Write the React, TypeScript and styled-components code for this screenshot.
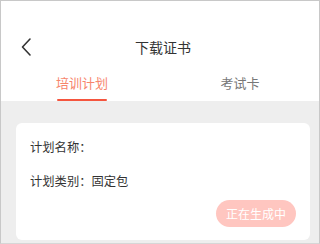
import styled, { createGlobalStyle } from "styled-components";

const Global = createGlobalStyle`
    html, body {
        margin: 0;
        padding: 0;
        background: #fff;
    }
    body {
        font-family: "Noto Sans CJK SC", "Noto Sans", sans-serif;
    }
`;

const Frame = styled.div`
    width: 320px;
    height: 244px;
    box-sizing: border-box;
    border: 1px solid #c8c8c8;
    border-bottom-color: #d6d6d6;
    display: flex;
    flex-direction: column;
    overflow: hidden;
    background: #eeeeee;
`;

const Top = styled.div`
    background: #fff;
    padding-top: 28px;
`;

const NavBar = styled.div`
    height: 36px;
    display: flex;
    align-items: center;
    justify-content: center;
    position: relative;
`;

const Back = styled.button`
    all: unset;
    position: absolute;
    left: 17px;
    top: 8px;
    width: 16px;
    height: 20px;
    cursor: pointer;
`;

const Title = styled.h1`
    margin: 0 0 0 6px;
    font-size: 14px;
    font-weight: 400;
    color: #333;
`;

const Tabs = styled.div`
    display: flex;
    height: 36px;
    padding-left: 2px;
`;

const Tab = styled.button<{ $active?: boolean }>`
    all: unset;
    flex: 1;
    display: flex;
    justify-content: center;
    align-items: flex-start;
    padding-top: 8px;
    font-size: 13px;
    color: ${(p) => (p.$active ? "#f7856d" : "#777")};
    cursor: pointer;
    span {
        position: relative;
        height: 28px;
        line-height: 20px;
        &::after {
            content: "";
            position: absolute;
            left: 1px;
            right: 1px;
            bottom: 0;
            height: 2px;
            border-radius: 1px;
            background: ${(p) => (p.$active ? "#f5553e" : "transparent")};
        }
    }
`;

const Body = styled.div`
    flex: 1;
    padding: 22px 9px 0 15px;
`;

const Card = styled.div`
    background: #fff;
    border-radius: 6px;
    padding: 15px 14px 0 14px;
    height: 117px;
    box-sizing: border-box;
    display: flex;
    flex-direction: column;
`;

const Row = styled.div`
    font-size: 12.3px;
    color: #333;
    line-height: 18px;
    & + & {
        margin-top: 16px;
    }
`;

const Actions = styled.div`
    display: flex;
    justify-content: flex-end;
    margin-top: 10px;
`;

const Generating = styled.button`
    all: unset;
    width: 80px;
    height: 27px;
    border-radius: 14px;
    background: #ffc6c0;
    color: #fff;
    font-size: 12px;
    display: flex;
    align-items: center;
    justify-content: center;
`;

export default function App() {
    return (
        <>
            <Global />
            <Frame>
                <Top>
                    <NavBar>
                        <Back aria-label="back">
                            <svg width="16" height="20" viewBox="0 0 16 20">
                                <path d="M12 2 L4.5 10 L12 18" fill="none" stroke="#333" strokeWidth="1.6" strokeLinecap="round" strokeLinejoin="round" />
                            </svg>
                        </Back>
                        <Title>下载证书</Title>
                    </NavBar>
                    <Tabs>
                        <Tab $active><span>培训计划</span></Tab>
                        <Tab><span>考试卡</span></Tab>
                    </Tabs>
                </Top>
                <Body>
                    <Card>
                        <Row>计划名称：</Row>
                        <Row>计划类别：固定包</Row>
                        <Actions>
                            <Generating>正在生成中</Generating>
                        </Actions>
                    </Card>
                </Body>
            </Frame>
        </>
    );
}
